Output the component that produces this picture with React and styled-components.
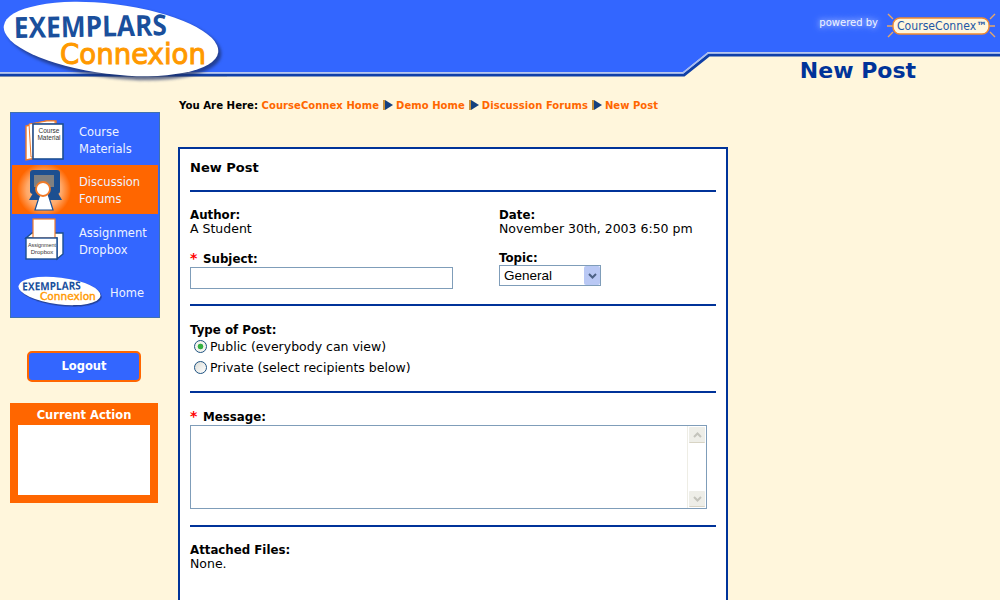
import React from 'react';
import styled, { createGlobalStyle } from 'styled-components';

const GlobalStyle = createGlobalStyle`
    html, body {
        margin: 0;
        height: 600px;
        overflow: hidden;
        background-color: #fff6dc;
        font-family: "DejaVu Sans", Verdana, sans-serif;
        color: #000;
    }
`;

const Page = styled.div`
    width: 1000px;
    height: 600px;
    overflow: hidden;
`;

const Banner = styled.header`
    position: relative;
    height: 77px;
    display: flex;
    justify-content: flex-end;
`;

const BannerShape = styled.svg`
    position: absolute;
    left: 0;
    top: 0;
`;

const LogoSlot = styled.div`
    position: absolute;
    left: 0;
    top: 0;
`;

const PoweredBy = styled.div`
    position: relative;
    display: flex;
    align-items: flex-start;
    gap: 7px;
    height: 50px;
    padding: 9px 3px 0 0;
    box-sizing: border-box;
`;

const PoweredText = styled.span`
    margin-top: 8px;
    font-size: 10px;
    color: #f0f4ff;
    text-shadow: 0 0 5px #b4c4ff, 0 0 9px #a9bcff;
`;

const PageTitle = styled.h1`
    position: absolute;
    right: 84px;
    top: 57px;
    margin: 0;
    font-size: 22px;
    line-height: 28px;
    font-weight: bold;
    color: #003399;
`;

const Columns = styled.div`
    display: flex;
    align-items: flex-start;
`;

const Sidebar = styled.aside`
    width: 150px;
    margin: 35px 18px 0 10px;
    flex: none;
`;

const Nav = styled.nav`
    box-sizing: border-box;
    height: 206px;
    padding: 1px;
    border: 1px solid #3f70b0;
    background-color: #3366ff;
    display: flex;
    flex-direction: column;
`;

const NavItem = styled.a`
    height: ${(p) => p.$height}px;
    flex: none;
    display: flex;
    align-items: center;
    background-color: ${(p) => (p.$active ? '#ff6600' : 'transparent')};
    color: #eef2ff;
    font-size: 11.5px;
    line-height: 17px;
`;

const NavIcon = styled.span`
    width: ${(p) => p.$width || 67}px;
    flex: none;
    display: flex;
`;

const NavLabel = styled.span`
    margin-top: 2px;
`;

const HomeLogo = styled.span`
    margin-left: 5px;
    display: flex;
`;

const LogoutButton = styled.button`
    display: block;
    box-sizing: border-box;
    width: 114px;
    height: 31px;
    margin: 33px 0 0 17px;
    padding: 0 0 2px;
    border: 2px solid #ff6600;
    border-radius: 5px;
    background-color: #3366ff;
    color: #fff;
    font-family: inherit;
    font-size: 11.5px;
    font-weight: bold;
`;

const ActionBox = styled.section`
    box-sizing: border-box;
    width: 148px;
    height: 100px;
    margin-top: 21px;
    padding: 0 8px 8px;
    background-color: #ff6600;
    display: flex;
    flex-direction: column;
`;

const ActionTitle = styled.h3`
    margin: 0;
    height: 22px;
    font-size: 11.5px;
    line-height: 25px;
    font-weight: bold;
    text-align: center;
    color: #fff;
`;

const ActionBody = styled.div`
    flex: 1;
    background-color: #fff;
`;

const Main = styled.main`
    width: 550px;
    margin-top: 21px;
    flex: none;
`;

const Crumbs = styled.div`
    display: flex;
    align-items: center;
    height: 14px;
    margin-left: 1px;
    font-size: 10px;
    font-weight: bold;
    letter-spacing: 0.05px;
    white-space: pre;
`;

const CrumbLead = styled.span`
    font-size: 10.2px;
    letter-spacing: 0;
`;

const Crumb = styled.a`
    color: #ff6600;
`;

const CrumbArrow = styled.svg`
    margin: 0 3px 0 4px;
`;

const Card = styled.section`
    box-sizing: border-box;
    width: 550px;
    height: 600px;
    margin-top: 35px;
    padding: 11px 10px 0;
    border: 2px solid #003399;
    background-color: #fff;
    font-size: 12.5px;
    line-height: 14px;
`;

const CardTitle = styled.h2`
    margin: 0;
    padding-top: 1px;
    font-size: 13px;
    line-height: 14px;
    font-weight: bold;
`;

const Rule = styled.hr`
    margin: ${(p) => p.$top}px 0 ${(p) => p.$bottom}px;
    height: 2px;
    border: 0;
    background-color: #003399;
`;

const FieldGrid = styled.div`
    display: grid;
    grid-template-columns: 309px 1fr;
`;

const Field = styled.div`
    margin-bottom: ${(p) => p.$gap || 0}px;
`;

const Label = styled.div`
    font-size: 11.8px;
    font-weight: bold;
`;

const Star = styled.span`
    display: inline-block;
    width: 13px;
    font-size: 14px;
    line-height: 0;
    color: #ff0000;
`;

const TextInput = styled.input`
    display: block;
    box-sizing: border-box;
    width: ${(p) => p.$width}px;
    height: 22px;
    margin-top: 1px;
    padding: 0;
    border: 1px solid #7f9db9;
    background-color: #fff;
`;

const SelectWrap = styled.div`
    position: relative;
    width: 102px;
    height: 21px;
`;

const Select = styled.select`
    appearance: none;
    display: block;
    box-sizing: border-box;
    width: 100%;
    height: 100%;
    padding: 0 0 0 4px;
    border: 1px solid #7f9db9;
    border-radius: 0;
    background-color: #fff;
    font-family: "Liberation Sans", Arial, sans-serif;
    font-size: 13.5px;
    color: #000;
`;

const SelectArrow = styled.span`
    position: absolute;
    right: 1px;
    top: 1px;
    width: 16px;
    height: 19px;
    display: flex;
    align-items: center;
    justify-content: center;
    border-radius: 2px;
    background-color: #b9c8f4;
    pointer-events: none;
`;

const RadioGroup = styled.div`
    margin-top: -1px;
`;

const RadioRow = styled.label`
    display: flex;
    align-items: center;
    height: 21px;
    padding-left: 4px;
`;

const Radio = styled.input`
    appearance: none;
    box-sizing: border-box;
    width: 13px;
    height: 13px;
    margin: 0 3px 0 0;
    border: 1px solid #1d5281;
    border-radius: 50%;
    background: ${(p) => (p.checked
        ? 'radial-gradient(circle, #35b040 0 2.5px, #f4f4ee 3.2px)'
        : 'linear-gradient(135deg, #dcdcd6, #ffffff)')};
`;

const MessageBox = styled.div`
    display: flex;
    box-sizing: border-box;
    width: 517px;
    height: 84px;
    margin-top: 1px;
    border: 1px solid #7f9db9;
`;

const MessageInput = styled.textarea`
    flex: 1;
    padding: 0;
    border: 0;
    outline: 0;
    resize: none;
`;

const Scrollbar = styled.div`
    width: 16px;
    flex: none;
    padding: 1px;
    display: flex;
    flex-direction: column;
    justify-content: space-between;
    border-left: 1px solid #eeede5;
`;

const ScrollButton = styled.span`
    height: 15px;
    display: flex;
    align-items: center;
    justify-content: center;
    border-radius: 1px;
    background-color: #eeeee8;
    border-bottom: 1px solid #d8d4c4;
`;

const UploadRow = styled.div`
    display: flex;
    gap: 3px;
    margin: 29px 0 0 162px;
`;

const FileButton = styled.button`
    width: 78px;
    height: 22px;
    margin-top: 1px;
    border: 0;
    border-top: 1px solid #e4e4da;
    background-color: #f4f4ee;
`;

const Logo = ({ width }) => (
    <svg width={width} height={width * 85 / 230} viewBox="0 0 230 85">
        <ellipse cx="114" cy="42" rx="108" ry="36" transform="rotate(7 114 42)" fill="#1c2f66" opacity="0.7" style={{ filter: 'blur(1.5px)' }} />
        <ellipse cx="111" cy="39" rx="108" ry="35" transform="rotate(7 111 39)" fill="#fff" />
        <text x="14" y="38" textLength="153" lengthAdjust="spacingAndGlyphs" transform="rotate(-1 14 38)"
            fontFamily="'Open Sans', sans-serif" fontSize="29" fontWeight="700" fill="#1a4f9c">EXEMPLARS</text>
        <text x="60" y="64" textLength="146" lengthAdjust="spacingAndGlyphs" stroke="#ff9900" strokeWidth="1"
            fontFamily="'DejaVu Sans', sans-serif" fontSize="28" fill="#ff9900">Connexion</text>
    </svg>
);

const CourseConnexBadge = () => (
    <svg width="112" height="30" viewBox="0 0 112 30">
        <g stroke="#e8a868" strokeWidth="1.4">
            <path d="M2 17h6M3 5l5 5M3 28l5-5M104 17h6M110 5l-5 5M110 28l-5-5" />
        </g>
        <rect x="8" y="9" width="96" height="16" rx="7" fill="#fff6dc" stroke="#f08a30" strokeWidth="1.4" />
        <text x="12" y="21" fontFamily="'DejaVu Sans', sans-serif" fontSize="11.5" textLength="90"
            lengthAdjust="spacingAndGlyphs" fill="#1d57a5">CourseConnex<tspan fontWeight="bold">™</tspan></text>
    </svg>
);

const MaterialsIcon = () => (
    <svg width="67" height="51" viewBox="0 0 67 51">
        <g transform="translate(12 0)">
            <path d="M2 12l20-5h10v37H12L2 46z" fill="#fff" stroke="#f07a28" strokeWidth="1.4" />
            <path d="M5 10l18-3h8v3H9v33H7z" fill="#fff" stroke="#f07a28" strokeWidth="1" />
            <rect x="9" y="10" width="30" height="35" fill="#fff" stroke="#1d4f90" strokeWidth="1.6" />
            <text x="25" y="19" textAnchor="middle" fontSize="6.5" fontFamily="'Liberation Sans', sans-serif" fill="#333">Course</text>
            <text x="25" y="26" textAnchor="middle" fontSize="6.5" fontFamily="'Liberation Sans', sans-serif" fill="#333">Material</text>
        </g>
    </svg>
);

const ForumsIcon = () => (
    <svg width="67" height="49" viewBox="0 0 67 49">
        <defs>
            <radialGradient id="forumGlow">
                <stop offset="0" stopColor="#ffd8b0" />
                <stop offset="0.65" stopColor="#ffa868" />
                <stop offset="1" stopColor="#ff6600" />
            </radialGradient>
        </defs>
        <circle cx="32" cy="25" r="27" fill="url(#forumGlow)" />
        <rect x="18" y="5" width="30" height="24" rx="3" fill="#1d4f90" />
        <rect x="22" y="10" width="20" height="12" fill="#808080" />
        <path d="M17 35l4-7h25l4 7z" fill="#1d4f90" />
        <path d="M23 45l5-16h8l5 16z" fill="#fff" stroke="#1d4f90" strokeWidth="1.2" />
        <circle cx="31" cy="24" r="7" fill="#fff" stroke="#f07a28" strokeWidth="1.8" />
    </svg>
);

const DropboxIcon = () => (
    <svg width="67" height="54" viewBox="0 0 67 54">
        <path d="M14 24l6-5h31v21l-6 5V24z" fill="#fff" stroke="#1d4f90" strokeWidth="1.4" />
        <rect x="21" y="5" width="22" height="19" fill="#fff" stroke="#f07a28" strokeWidth="1.2" />
        <rect x="14" y="24" width="31" height="21" fill="#fff" stroke="#1d4f90" strokeWidth="1.4" />
        <text x="30" y="33" textAnchor="middle" fontSize="6" textLength="28" lengthAdjust="spacingAndGlyphs"
            fontFamily="'Liberation Sans', sans-serif" fill="#333">Assignment</text>
        <text x="30" y="40" textAnchor="middle" fontSize="6" fontFamily="'Liberation Sans', sans-serif" fill="#333">Dropbox</text>
    </svg>
);

const CrumbSeparator = () => (
    <CrumbArrow width="10" height="10" viewBox="0 0 10 10">
        <rect x="0" y="0" width="2" height="10" fill="#c89038" />
        <path d="M2 0l8 5-8 5z" fill="#14407e" />
    </CrumbArrow>
);

const Chevron = ({ up, color }) => (
    <svg width="9" height="6" viewBox="0 0 9 6">
        <path d={up ? 'M1 5l3.5-3.5L8 5' : 'M1 1l3.5 3.5L8 1'} fill="none" stroke={color} strokeWidth="2" />
    </svg>
);

const crumbs = ['CourseConnex Home', 'Demo Home', 'Discussion Forums', 'New Post'];

export default function App() {
    return (
        <Page>
            <GlobalStyle />
            <Banner>
                <BannerShape width="1000" height="78" viewBox="0 0 1000 78">
                    <path d="M0 0H1000V52H708L683 72H0z" fill="#3366ff" />
                    <path d="M0 75H684L709 55H1000" fill="none" stroke="#0f3fa8" strokeWidth="3" />
                    <path d="M0 73H683L708 53H1000" fill="none" stroke="#a3b8f2" strokeWidth="1.6" />
                    <path d="M0 76.5H227" fill="none" stroke="#7f8fb0" strokeWidth="1" />
                </BannerShape>
                <LogoSlot><Logo width={230} /></LogoSlot>
                <PoweredBy>
                    <PoweredText>powered by</PoweredText>
                    <CourseConnexBadge />
                </PoweredBy>
                <PageTitle>New Post</PageTitle>
            </Banner>
            <Columns>
                <Sidebar>
                    <Nav>
                        <NavItem $height={51}><NavIcon><MaterialsIcon /></NavIcon><NavLabel>Course<br />Materials</NavLabel></NavItem>
                        <NavItem $height={49} $active><NavIcon><ForumsIcon /></NavIcon><NavLabel>Discussion<br />Forums</NavLabel></NavItem>
                        <NavItem $height={54}><NavIcon><DropboxIcon /></NavIcon><NavLabel>Assignment<br />Dropbox</NavLabel></NavItem>
                        <NavItem $height={49}>
                            <NavIcon $width={98}><HomeLogo><Logo width={88} /></HomeLogo></NavIcon>
                            <NavLabel>Home</NavLabel>
                        </NavItem>
                    </Nav>
                    <LogoutButton>Logout</LogoutButton>
                    <ActionBox>
                        <ActionTitle>Current Action</ActionTitle>
                        <ActionBody />
                    </ActionBox>
                </Sidebar>
                <Main>
                    <Crumbs>
                        <CrumbLead>You Are Here: </CrumbLead>
                        {crumbs.map((c, i) => (
                            <React.Fragment key={c}>
                                {i > 0 && <CrumbSeparator />}
                                <Crumb>{c}</Crumb>
                            </React.Fragment>
                        ))}
                    </Crumbs>
                    <Card>
                        <CardTitle>New Post</CardTitle>
                        <Rule $top={15} $bottom={16} />
                        <FieldGrid>
                            <div>
                                <Field $gap={16}><Label>Author:</Label>A Student</Field>
                                <Field><Label><Star>*</Star>Subject:</Label><TextInput $width={263} /></Field>
                            </div>
                            <div>
                                <Field $gap={15}><Label>Date:</Label>November 30th, 2003 6:50 pm</Field>
                                <Field>
                                    <Label>Topic:</Label>
                                    <SelectWrap>
                                        <Select defaultValue="General"><option>General</option></Select>
                                        <SelectArrow><Chevron color="#4d6185" /></SelectArrow>
                                    </SelectWrap>
                                </Field>
                            </div>
                        </FieldGrid>
                        <Rule $top={15} $bottom={17} />
                        <Label>Type of Post:</Label>
                        <RadioGroup>
                            <RadioRow><Radio type="radio" name="kind" checked readOnly />Public (everybody can view)</RadioRow>
                            <RadioRow><Radio type="radio" name="kind" readOnly />Private (select recipients below)</RadioRow>
                        </RadioGroup>
                        <Rule $top={13} $bottom={17} />
                        <Label><Star>*</Star>Message:</Label>
                        <MessageBox>
                            <MessageInput />
                            <Scrollbar>
                                <ScrollButton><Chevron up color="#c4c4bc" /></ScrollButton>
                                <ScrollButton><Chevron color="#c4c4bc" /></ScrollButton>
                            </Scrollbar>
                        </MessageBox>
                        <Rule $top={16} $bottom={16} />
                        <Label>Attached Files:</Label>
                        None.
                        <UploadRow>
                            <TextInput $width={202} />
                            <FileButton aria-label="Browse" />
                        </UploadRow>
                    </Card>
                </Main>
            </Columns>
        </Page>
    );
}
